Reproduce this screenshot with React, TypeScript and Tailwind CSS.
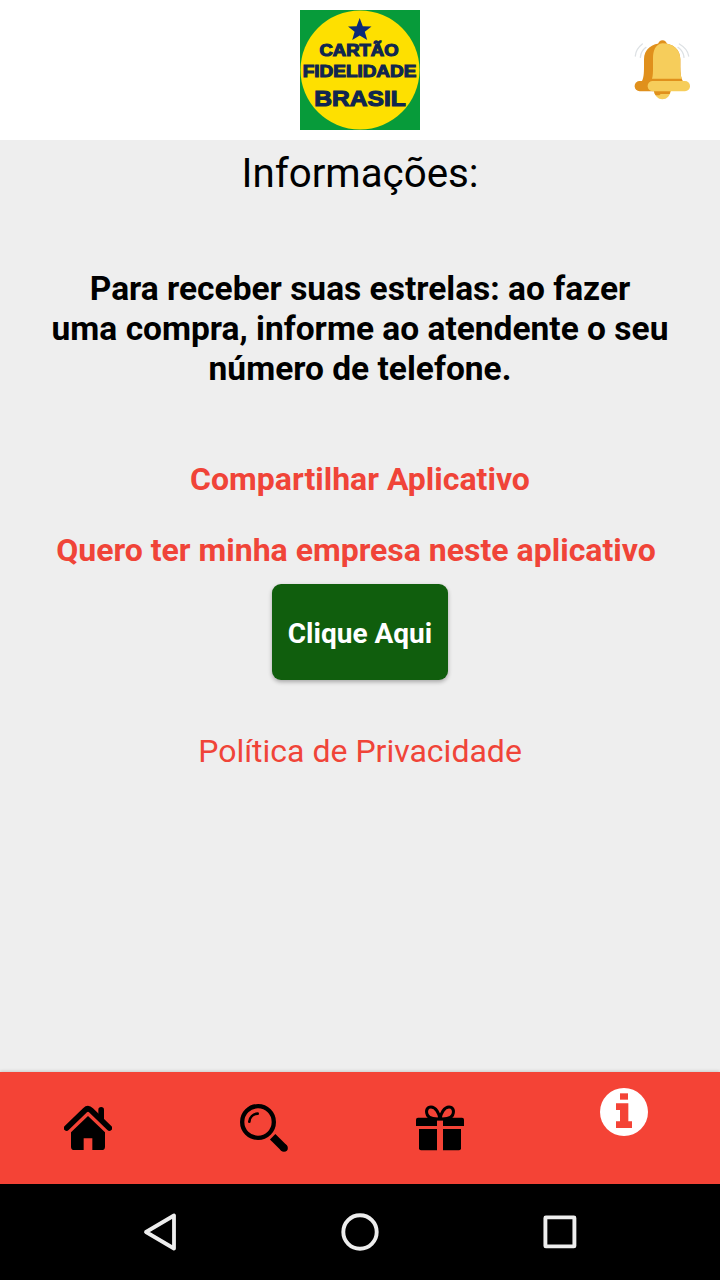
import type { ReactNode } from "react";

function Logo() {
  return (
    <svg className="h-[120px] w-[120px]" viewBox="0 0 120 120">
      <rect width="120" height="120" fill="#079b3a" />
      <circle cx="60" cy="60" r="59.5" fill="#fee000" />
      <path
        d="M59.7 8L62.8 16.2L71.5 16.6L64.8 21.8L67.2 30L59.7 25.4L52.2 30L54.6 21.8L48 16.6L56.6 16.2Z"
        fill="#0b2a78"
      />
      <g
        fill="#10264f"
        stroke="#10264f"
        strokeWidth="1.1"
        fontWeight="700"
        fontFamily="'Liberation Sans', Arial, sans-serif"
      >
        <text x="19.5" y="46" fontSize="15.7" textLength="79" lengthAdjust="spacingAndGlyphs">
          CARTÃO
        </text>
        <text x="2.8" y="66.6" fontSize="16.8" textLength="113.5" lengthAdjust="spacingAndGlyphs">
          FIDELIDADE
        </text>
        <text x="14.3" y="95.7" fontSize="21.8" textLength="91.5" lengthAdjust="spacingAndGlyphs">
          BRASIL
        </text>
      </g>
    </svg>
  );
}

function Bell() {
  return (
    <svg className="h-[60px] w-[60px] overflow-visible" viewBox="0 12 180 180" fill="none">
      <g stroke="#dde1e4" strokeWidth="4" strokeLinecap="round">
        <path d="M31 24C18 34 11 46 10 60" />
        <path d="M42 34C31 42 26 51 25 64" />
        <path d="M142 24C159 34 168 46 170 60" />
        <path d="M138 34C149 42 155 51 156 64" />
      </g>
      <path d="M78 27C78 8 105 8 105 27Z" fill="#e0901c" />
      <path d="M65 160C67 180 78 190 91 190C105 190 115 180 117 160Z" fill="#f6cd5b" />
      <path d="M65 160C66 169 68 174 71 178H82L86 174H113L117 160Z" fill="#e0901c" />
      <path
        d="M28 138C35 128 36 112 36 92V70C36 40 60 22 91 22C124 22 145 42 145 70V92C145 112 147 128 154 138Z"
        fill="#e0901c"
      />
      <path
        d="M60 128C63 118 63 106 63 92V68C63 44 70 25 91 22C124 22 145 42 145 70V92C145 106 146 118 149 128Z"
        fill="#f6cd5b"
      />
      <rect x="8" y="135" width="100" height="31" rx="15" fill="#e0901c" />
      <rect x="47" y="135" width="127" height="31" rx="15" fill="#f6cd5b" />
    </svg>
  );
}

function HomeIcon() {
  return (
    <svg className="h-12 w-12" viewBox="24 24 144 144">
      <path d="M127 58V41Q127 33 135.5 33Q144 33 144 41V76Z" fill="black" />
      <path
        d="M32 96L87 43Q96 34 105 43L160 96"
        fill="none"
        stroke="black"
        strokeWidth="17"
        strokeLinecap="round"
      />
      <path
        d="M96 60L147 109V152Q147 162 137 162H109V127H83V162H55Q45 162 45 152V109Z"
        fill="black"
      />
    </svg>
  );
}

function SearchIcon() {
  return (
    <svg className="h-12 w-12" viewBox="45 42 144 144" fill="none" stroke="black">
      <circle cx="99" cy="96" r="47.5" strokeWidth="13" />
      <path d="M73 95C74 82 84 72 98 71" strokeWidth="8" strokeLinecap="round" />
      <path d="M143 140L177 174" strokeWidth="23" />
      <circle cx="177" cy="174" r="6" strokeWidth="11" />
    </svg>
  );
}

function GiftIcon() {
  return (
    <svg className="h-12 w-12" viewBox="48 42 144 144">
      <path
        d="M120 86C108 88 88 87 82 75C76 61 82 51 93 51C108 51 117 70 120 86C123 70 132 51 147 51C158 51 164 61 158 75C152 87 132 88 120 86Z"
        fill="none"
        stroke="black"
        strokeWidth="9"
      />
      <path
        d="M54 83H186Q192 83 192 89V108H129V91H111V108H48V89Q48 83 54 83Z"
        fill="black"
      />
      <path d="M57 117H111V181H63Q57 181 57 175Z" fill="black" />
      <path d="M129 117H183V175Q183 181 177 181H129Z" fill="black" />
    </svg>
  );
}

function InfoIcon() {
  return (
    <svg className="h-12 w-12" viewBox="45 69 144 144">
      <circle cx="117" cy="141" r="72" fill="white" />
      <rect x="105" y="85" width="24" height="19" fill="#f44336" />
      <path d="M93 115H130V169H141V189H93V169H105V135H93Z" fill="#f44336" />
    </svg>
  );
}

function Tab({ children }: { children: ReactNode }) {
  return <button className="flex w-44 justify-center pt-8">{children}</button>;
}

function TabBar() {
  return (
    <nav className="flex h-28 items-start bg-[#f44336] shadow-[0_-1px_3px_rgba(0,0,0,0.15)]">
      <Tab>
        <HomeIcon />
      </Tab>
      <Tab>
        <SearchIcon />
      </Tab>
      <Tab>
        <GiftIcon />
      </Tab>
      <button className="flex w-48 justify-center pt-4">
        <InfoIcon />
      </button>
    </nav>
  );
}

function SystemBar() {
  return (
    <div className="flex h-24 items-center justify-center gap-[152px] bg-black">
      <svg className="h-12 w-12" viewBox="0 0 48 48" fill="none">
        <path
          d="M10 24L38 7.5V40.5Z"
          stroke="#eeeeee"
          strokeWidth="3.8"
          strokeLinejoin="round"
        />
      </svg>
      <svg className="h-12 w-12" viewBox="0 0 48 48" fill="none">
        <circle cx="24" cy="24" r="16.7" stroke="#eeeeee" strokeWidth="3.9" />
      </svg>
      <svg className="h-12 w-12" viewBox="0 0 48 48" fill="none">
        <rect x="9.4" y="9.4" width="29" height="29" rx="0.5" stroke="#eeeeee" strokeWidth="3.9" strokeLinejoin="round" />
      </svg>
    </div>
  );
}

export default function App() {
  return (
    <div className="flex h-[1280px] w-[720px] flex-col bg-[#eeeeee] font-['Roboto',sans-serif] text-black">
      <header className="grid h-[140px] grid-cols-3 items-center bg-white">
        <div />
        <div className="flex justify-center">
          <Logo />
        </div>
        <div className="flex justify-end pr-7">
          <Bell />
        </div>
      </header>

      <main className="flex flex-1 flex-col items-center pt-[10px] text-center">
        <h1 className="text-[40.3px] leading-[47px]">Informações:</h1>

        <p className="mt-[72px] text-[33.5px] leading-[40px] font-bold">
          Para receber suas estrelas: ao fazer
          <br />
          uma compra, informe ao atendente o seu
          <br />
          número de telefone.
        </p>

        <a className="mt-[71px] text-[32px] leading-[38px] font-bold text-[#f04438]">
          Compartilhar Aplicativo
        </a>

        <p className="mt-[33px] pr-2 text-[32px] leading-[38px] font-bold text-[#f04438]">
          Quero ter minha empresa neste aplicativo
        </p>
        <button className="mt-[15px] h-24 w-44 rounded-[9px] bg-[#105e0d] pt-1 text-[28px] font-bold text-white shadow-[0_2px_4px_rgba(0,0,0,0.3)]">
          Clique Aqui
        </button>

        <a className="mt-[52px] text-[32px] leading-[38px] text-[#f04438]">
          Política de Privacidade
        </a>
      </main>

      <TabBar />
      <SystemBar />
    </div>
  );
}
